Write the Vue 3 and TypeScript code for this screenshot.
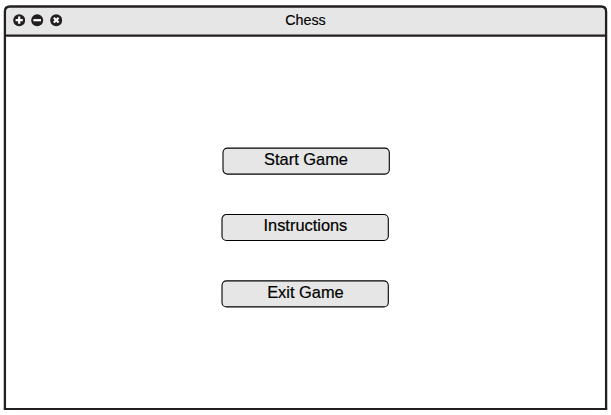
<script setup lang="ts">
interface MenuItem {
  id: string
  label: string
  x: number
  y: number
}

const title = 'Chess'

const controls: { id: string; glyph: string }[] = [
  { id: 'add', glyph: 'M6.2 2.6V9.8M2.6 6.2H9.8' },
  { id: 'minimize', glyph: 'M2.4 6.2H10' },
  { id: 'close', glyph: 'M3.8 3.8L8.6 8.6M8.6 3.8L3.8 8.6' },
]

// x and y are the sub-pixel origins of each button outline
const items: MenuItem[] = [
  { id: 'start', label: 'Start Game', x: 2, y: 1.1 },
  { id: 'instructions', label: 'Instructions', x: 1, y: 1.5 },
  { id: 'exit', label: 'Exit Game', x: 1, y: 0.9 },
]
</script>

<template>
  <main class="window">
    <svg class="frame" viewBox="0 0 611 415" aria-hidden="true">
      <path d="M4.9 35.6V11.5Q4.9 6.5 9.9 6.5H601.1Q606.1 6.5 606.1 11.5V35.6Z" fill="#e6e6e6" />
      <path
        d="M4.9 409V11.5Q4.9 6.5 9.9 6.5H601.1Q606.1 6.5 606.1 11.5V409M4.9 35.6H606.1"
        fill="none"
        stroke="#231f20"
        stroke-width="2.3"
      />
      <path d="M3.8 409H607.2" stroke="#231f20" stroke-width="2" />
    </svg>
    <div class="content">
      <header class="titlebar">
        <div class="controls">
          <svg v-for="c in controls" :key="c.id" class="control" viewBox="0 0 12.4 12.4">
            <circle cx="6.2" cy="6.2" r="6" fill="#231f20" />
            <path :d="c.glyph" stroke="#fff" stroke-width="2.2" fill="none" />
          </svg>
        </div>
        <h1 class="title">{{ title }}</h1>
      </header>
      <nav class="menu">
        <button v-for="item in items" :key="item.id" type="button" :class="['menu-button', item.id]">
          <svg class="outline" viewBox="0 0 170 29" aria-hidden="true">
            <rect :x="item.x" :y="item.y" width="166.3" height="26" rx="4.5" fill="#e6e6e6" stroke="#000" stroke-width="1.1" />
          </svg>
          <span class="label">{{ item.label }}</span>
        </button>
      </nav>
    </div>
  </main>
</template>

<style>
body {
  background: #fff;
}
</style>

<style scoped>
.window {
  display: grid;
  width: 611px;
  height: 415px;
  font-family: 'Liberation Sans', Arial, sans-serif;
  color: #000;
}

.frame,
.content {
  grid-area: 1 / 1;
}

.frame {
  display: block;
  width: 611px;
  height: 415px;
}

.content {
  z-index: 1;
}

.titlebar {
  box-sizing: border-box;
  display: grid;
  grid-template-columns: 1fr auto 1fr;
  align-items: start;
  height: 37px;
  padding: 12px 0 0 12.7px;
  margin-right: 12.7px;
}

.controls {
  display: flex;
  gap: 6.3px;
  padding-top: 2.3px;
}

.control {
  display: block;
  width: 12.4px;
  height: 12.4px;
}

.title {
  margin: 0;
  font-size: 14.3px;
  font-weight: 400;
  line-height: 16px;
  -webkit-text-stroke: 0.15px #000;
}

.menu {
  display: flex;
  flex-direction: column;
  align-items: flex-start;
  padding: 110px 0 0 221px;
}

.menu-button {
  display: grid;
  width: 170px;
  height: 29px;
  margin: 0 0 37px;
  padding: 0;
  border: 0;
  background: none;
  font: 16.4px/22px 'Liberation Sans', Arial, sans-serif;
  color: #000;
  -webkit-text-stroke: 0.2px #000;
}

.menu-button.instructions {
  margin-bottom: 38px;
}

.outline,
.label {
  grid-area: 1 / 1;
}

.outline {
  display: block;
  width: 170px;
  height: 29px;
}

.label {
  z-index: 1;
  padding: 1px 1.2px 0 0;
}

.start .label {
  padding-right: 0;
}
</style>
